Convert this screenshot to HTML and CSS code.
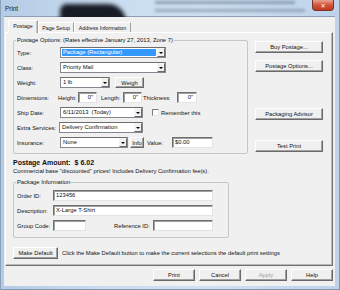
FILE: index.html
```html
<!DOCTYPE html>
<html>
<head>
<meta charset="utf-8">
<link rel="stylesheet" href="styles.css">
</head>
<body>
<div class="window">
  <div class="titlebar">
    <span class="title">Print</span>
    <div class="ghost ghost-dark"></div>
    <div class="ghost ghost-line1"></div>
    <div class="ghost ghost-line2"></div>
    <div class="close"><span class="x">✕</span></div>
  </div>
  <div class="client">
    <div class="tabs">
      <div class="tab active t1">Postage</div>
      <div class="tab t2">Page Setup</div>
      <div class="tab t3">Address Information</div>
    </div>
    <div class="panel">
      <div class="top">
        <fieldset class="group options">
          <legend>Postage Options: (Rates effective January 27, 2013, Zone 7)</legend>
          <div class="row">
            <span class="lbl">Type:</span>
            <div class="combo w106 selected"><span class="val">Package (Rectangular)</span><span class="arrow"></span></div>
          </div>
          <div class="row">
            <span class="lbl">Class:</span>
            <div class="combo w106"><span class="val">Priority Mail</span><span class="arrow"></span></div>
          </div>
          <div class="row">
            <span class="lbl">Weight:</span>
            <div class="combo w50"><span class="val">1 lb</span><span class="arrow"></span></div>
            <div class="btn weigh">Weigh</div>
          </div>
          <div class="row">
            <span class="lbl dim">Dimensions:</span>
            <span class="sub w20">Height:</span>
            <div class="input w19 num">0"</div>
            <span class="sub w22 ml4">Length:</span>
            <div class="input w19 num">0"</div>
            <span class="sub w34 ml1">Thickness:</span>
            <div class="input w20 num">0"</div>
          </div>
          <div class="row">
            <span class="lbl">Ship Date:</span>
            <div class="combo w83"><span class="val">6/11/2013 &nbsp;(Today)</span><span class="arrow"></span></div>
            <span class="check"></span>
            <span class="sub ml2">Remember this</span>
          </div>
          <div class="row">
            <span class="lbl narrow">Extra Services:</span>
            <div class="combo w84"><span class="val">Delivery Confirmation</span><span class="arrow"></span></div>
          </div>
          <div class="row">
            <span class="lbl">Insurance:</span>
            <div class="combo w68"><span class="val">None</span><span class="arrow"></span></div>
            <div class="btn info">Info</div>
            <span class="sub w25 ml3">Value:</span>
            <div class="input w41">$0.00</div>
          </div>
        </fieldset>
        <div class="side">
          <div class="btn side-btn buy">Buy Postage...</div>
          <div class="btn side-btn opts">Postage Options...</div>
          <div class="btn side-btn adv">Packaging Advisor</div>
          <div class="btn side-btn test">Test Print</div>
        </div>
      </div>
      <div class="amount">Postage Amount: &nbsp;$ 6.02</div>
      <div class="note">Commercial base "discounted" prices! Includes Delivery Confirmation fee(s).</div>
      <fieldset class="group pkg">
        <legend>Package Information</legend>
        <div class="prow">
          <span class="plbl">Order ID:</span>
          <div class="input w160">123456</div>
        </div>
        <div class="prow">
          <span class="plbl">Description:</span>
          <div class="input w160">X-Large T-Shirt</div>
        </div>
        <div class="prow">
          <span class="plbl">Group Code:</span>
          <div class="input w33"></div>
          <span class="sub ref">Reference ID:</span>
          <div class="input w60"></div>
        </div>
      </fieldset>
      <div class="default-row">
        <div class="btn mkdef">Make Default</div>
        <span class="hint">Click the Make Default button to make the current selections the default print settings</span>
      </div>
    </div>
    <div class="footer">
      <div class="btn fbtn">Print</div>
      <div class="btn fbtn">Cancel</div>
      <div class="btn fbtn disabled">Apply</div>
      <div class="btn fbtn">Help</div>
    </div>
  </div>
</div>
</body>
</html>
```

FILE: styles.css
```css
* { box-sizing: border-box; }

html, body {
  margin: 0;
  padding: 0;
}

body {
  width: 340px;
  height: 290px;
  overflow: hidden;
  font-family: "Liberation Sans", Arial, sans-serif;
  font-size: 5.8px;
  color: #111;
  background: #bcd2ea;
}

.window {
  width: 340px;
  height: 290px;
  display: flex;
  flex-direction: column;
  background: linear-gradient(90deg, #b3cbe4 0%, #c9dcf0 30%, #cfe0f2 60%, #bdd3ea 100%);
  box-shadow: inset 1px 0 0 #8aa2bb, inset -1px 0 0 #7f97b1, inset 0 -1px 0 #7f97b1;
}

/* title bar */
.titlebar {
  position: relative;
  height: 17px;
  flex: none;
  display: flex;
  align-items: center;
  padding-left: 5px;
  overflow: hidden;
}

.title {
  font-size: 6.4px;
  color: #1e1e1e;
  position: relative;
  z-index: 2;
}

.ghost {
  position: absolute;
  filter: blur(2px);
}

.ghost-dark {
  left: 60px;
  top: 4px;
  width: 66px;
  height: 18px;
  background: #161b26;
  border-radius: 8px 22px 0 0;
}

.ghost-line1 {
  left: 155px;
  top: 1px;
  width: 140px;
  height: 3px;
  background: rgba(90, 105, 125, 0.55);
  filter: blur(1.5px);
}

.ghost-line2 {
  left: 155px;
  top: 9px;
  width: 150px;
  height: 3px;
  background: rgba(90, 105, 125, 0.45);
  filter: blur(1.5px);
}

.close {
  position: absolute;
  right: 6px;
  top: 0;
  width: 22px;
  height: 11px;
  border-radius: 0 0 4px 4px;
  background: linear-gradient(#e8a493, #d2533b 50%, #c03a22);
  border: 1px solid #7d3327;
  border-top: none;
  display: flex;
  align-items: center;
  justify-content: center;
  z-index: 3;
}

.close .x {
  color: #fff;
  font-family: "DejaVu Sans", sans-serif;
  font-size: 6px;
  font-weight: bold;
}

/* client area */
.client {
  flex: 1;
  margin: 0 5px 4px 4px;
  background: #f0f0f0;
  display: flex;
  flex-direction: column;
  box-shadow: 0 -1px 0 #8ba0b8;
}

.tabs {
  height: 15px;
  flex: none;
  display: flex;
  align-items: flex-end;
  padding-left: 4px;
}

.tab {
  height: 10px;
  font-size: 5.3px;
  display: flex;
  align-items: center;
  justify-content: center;
  border: 1px solid #a0a0a0;
  border-bottom: none;
  border-left-color: #fff;
  border-top-color: #fff;
  background: #f0f0f0;
  white-space: nowrap;
}

.t1 { width: 30px; }
.t2 { width: 36px; }
.t3 { width: 57px; }

.tab.active {
  height: 13px;
  margin-bottom: -1px;
  padding-bottom: 2px;
  position: relative;
  z-index: 1;
  box-shadow: inset -1px 0 0 #c8c8c8;
}

.panel {
  margin-left: 1px;
  width: 328px;
  height: 234px;
  flex: none;
  border: 1px solid;
  border-color: #fff #707070 #707070 #fff;
  box-shadow: inset -1px -1px 0 #b9b9b9;
  padding: 3px 0 0 7px;
  display: flex;
  flex-direction: column;
}

.top {
  display: flex;
  gap: 7px;
  align-items: flex-start;
}

fieldset.group {
  margin: 0;
  min-width: 0;
  border: 1px solid #c6c6c6;
  border-radius: 2px;
}

fieldset.group legend {
  line-height: 8px;
  padding: 0 1px;
  margin-left: -1px;
}

.options {
  width: 235px;
  padding: 1px 3px 3px 3px;
}

.row {
  height: 15px;
  display: flex;
  align-items: center;
  white-space: nowrap;
}

.lbl { width: 43px; flex: none; }
.lbl.dim { width: 41px; }
.lbl.narrow { width: 42px; }

.sub { flex: none; white-space: nowrap; }
.w20 { width: 20px; }
.w22 { width: 22px; }
.w25 { width: 25px; }
.w34 { width: 34px; }
.ml1 { margin-left: 1px; }
.ml2 { margin-left: 2px; }
.ml3 { margin-left: 3px; }
.ml4 { margin-left: 4px; }

/* combo box */
.combo {
  height: 11px;
  flex: none;
  display: flex;
  align-items: center;
  background: #fff;
  border: 1px solid #828790;
  border-top-color: #6d6d6d;
  padding: 0 0 0 1px;
}

.combo .val {
  flex: 1;
  height: 7px;
  line-height: 7px;
  padding-left: 1px;
  overflow: hidden;
}

.combo.selected .val {
  background: #3399ff;
  color: #fff;
  margin-right: 1px;
}

.combo .arrow {
  width: 8px;
  height: 9px;
  flex: none;
  border: 1px solid;
  border-color: #f4f4f4 #6a6a6a #6a6a6a #f4f4f4;
  background: #f0f0f0;
  display: flex;
  align-items: center;
  justify-content: center;
}

.combo .arrow::after {
  content: "";
  border-left: 2px solid transparent;
  border-right: 2px solid transparent;
  border-top: 2px solid #000;
}

.w106 { width: 106px; }
.w50 { width: 50px; }
.w83 { width: 83px; }
.w84 { width: 84px; }
.w68 { width: 68px; }

/* input */
.input {
  height: 11px;
  flex: none;
  background: #fff;
  border: 1px solid;
  border-color: #6f6f6f #e3e3e3 #e3e3e3 #6f6f6f;
  box-shadow: inset 1px 1px 0 #a0a0a0;
  padding-left: 2px;
  line-height: 9px;
  white-space: nowrap;
  overflow: hidden;
}

.input.num {
  text-align: right;
  padding-right: 3px;
}

.w19 { width: 19px; }
.w41 { width: 41px; }
.w160 { width: 160px; }
.w33 { width: 33px; }
.w60 { width: 60px; }

.check {
  width: 7px;
  height: 7px;
  flex: none;
  margin-left: 9px;
  background: #fff;
  border: 1px solid;
  border-color: #7b7b7b #e6e6e6 #e6e6e6 #7b7b7b;
}

/* buttons */
.btn {
  height: 12px;
  flex: none;
  display: flex;
  align-items: center;
  justify-content: center;
  background: #f0f0f0;
  border: 1px solid;
  border-color: #fff #696969 #696969 #fff;
  box-shadow: inset -1px -1px 0 #a0a0a0;
  white-space: nowrap;
}

.weigh {
  width: 29px;
  height: 11px;
  margin-left: 5px;
}

.info {
  width: 14px;
  height: 11px;
  margin-left: 2px;
}

.side {
  display: flex;
  flex-direction: column;
  width: 68px;
}

.side-btn { width: 68px; }
.buy { margin-top: 5px; }
.opts { margin-top: 7px; }
.adv { margin-top: 36px; }
.test { margin-top: 20px; }

.amount {
  margin-top: 4px;
  line-height: 9px;
  font-size: 7px;
  font-weight: bold;
}

.note {
  line-height: 9px;
}

.pkg {
  width: 216px;
  margin-top: 2px !important;
  padding: 2px 3px 4px 3px;
}

.prow {
  height: 15px;
  display: flex;
  align-items: center;
}

.plbl { width: 36px; flex: none; white-space: nowrap; }

.ref {
  margin-left: 28px;
  width: 39px;
}

.default-row {
  margin-top: 9px;
  display: flex;
  align-items: center;
}

.mkdef {
  width: 45px;
}

.hint {
  margin-left: 4px;
  white-space: nowrap;
}

.footer {
  display: flex;
  justify-content: flex-end;
  gap: 4px;
  padding: 3px 2px 0 0;
}

.fbtn {
  width: 42px;
}

.fbtn.disabled {
  color: #a0a0a0;
}
```
